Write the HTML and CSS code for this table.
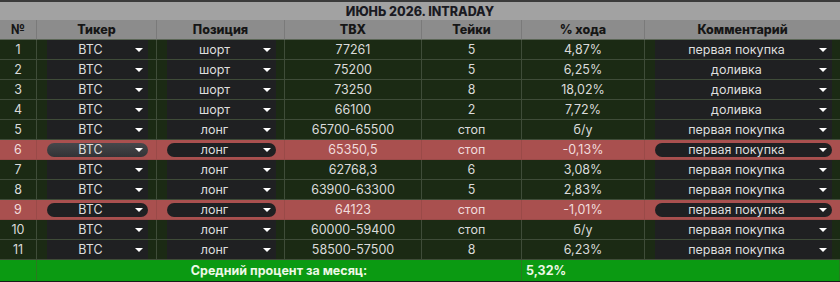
FILE: index.html
```html
<!DOCTYPE html>
<html lang="ru">
<head>
<meta charset="utf-8">
<link rel="stylesheet" href="styles.css">
</head>
<body>
<div class="sheet">
  <div class="topline"></div>
  <div class="title">ИЮНЬ 2026. INTRADAY</div>
  <div class="row head">
    <div class="c">№</div><div class="c">Тикер</div><div class="c">Позиция</div><div class="c">ТВХ</div><div class="c">Тейки</div><div class="c">% хода</div><div class="c">Комментарий</div>
  </div>

  <div class="row">
    <div class="c">1</div>
    <div class="c"><div class="dd"><span>BTC</span><i class="arr"></i></div></div>
    <div class="c"><div class="dd"><span>шорт</span><i class="arr"></i></div></div>
    <div class="c">77261</div><div class="c">5</div><div class="c">4,87%</div>
    <div class="c"><div class="dd"><span>первая покупка</span><i class="arr"></i></div></div>
  </div>
  <div class="row">
    <div class="c">2</div>
    <div class="c"><div class="dd"><span>BTC</span><i class="arr"></i></div></div>
    <div class="c"><div class="dd"><span>шорт</span><i class="arr"></i></div></div>
    <div class="c">75200</div><div class="c">5</div><div class="c">6,25%</div>
    <div class="c"><div class="dd"><span>доливка</span><i class="arr"></i></div></div>
  </div>
  <div class="row">
    <div class="c">3</div>
    <div class="c"><div class="dd"><span>BTC</span><i class="arr"></i></div></div>
    <div class="c"><div class="dd"><span>шорт</span><i class="arr"></i></div></div>
    <div class="c">73250</div><div class="c">8</div><div class="c">18,02%</div>
    <div class="c"><div class="dd"><span>доливка</span><i class="arr"></i></div></div>
  </div>
  <div class="row">
    <div class="c">4</div>
    <div class="c"><div class="dd"><span>BTC</span><i class="arr"></i></div></div>
    <div class="c"><div class="dd"><span>шорт</span><i class="arr"></i></div></div>
    <div class="c">66100</div><div class="c">2</div><div class="c">7,72%</div>
    <div class="c"><div class="dd"><span>доливка</span><i class="arr"></i></div></div>
  </div>
  <div class="row">
    <div class="c">5</div>
    <div class="c"><div class="dd"><span>BTC</span><i class="arr"></i></div></div>
    <div class="c"><div class="dd"><span>лонг</span><i class="arr"></i></div></div>
    <div class="c">65700-65500</div><div class="c">стоп</div><div class="c">б/у</div>
    <div class="c"><div class="dd"><span>первая покупка</span><i class="arr"></i></div></div>
  </div>
  <div class="row red">
    <div class="c">6</div>
    <div class="c"><div class="dd light"><span>BTC</span><i class="arr"></i></div></div>
    <div class="c"><div class="dd"><span>лонг</span><i class="arr"></i></div></div>
    <div class="c">65350,5</div><div class="c">стоп</div><div class="c">-0,13%</div>
    <div class="c"><div class="dd"><span>первая покупка</span><i class="arr"></i></div></div>
  </div>
  <div class="row">
    <div class="c">7</div>
    <div class="c"><div class="dd"><span>BTC</span><i class="arr"></i></div></div>
    <div class="c"><div class="dd"><span>лонг</span><i class="arr"></i></div></div>
    <div class="c">62768,3</div><div class="c">6</div><div class="c">3,08%</div>
    <div class="c"><div class="dd"><span>первая покупка</span><i class="arr"></i></div></div>
  </div>
  <div class="row">
    <div class="c">8</div>
    <div class="c"><div class="dd"><span>BTC</span><i class="arr"></i></div></div>
    <div class="c"><div class="dd"><span>лонг</span><i class="arr"></i></div></div>
    <div class="c">63900-63300</div><div class="c">5</div><div class="c">2,83%</div>
    <div class="c"><div class="dd"><span>первая покупка</span><i class="arr"></i></div></div>
  </div>
  <div class="row red">
    <div class="c">9</div>
    <div class="c"><div class="dd"><span>BTC</span><i class="arr"></i></div></div>
    <div class="c"><div class="dd"><span>лонг</span><i class="arr"></i></div></div>
    <div class="c">64123</div><div class="c">стоп</div><div class="c">-1,01%</div>
    <div class="c"><div class="dd"><span>первая покупка</span><i class="arr"></i></div></div>
  </div>
  <div class="row">
    <div class="c">10</div>
    <div class="c"><div class="dd"><span>BTC</span><i class="arr"></i></div></div>
    <div class="c"><div class="dd"><span>лонг</span><i class="arr"></i></div></div>
    <div class="c">60000-59400</div><div class="c">стоп</div><div class="c">б/у</div>
    <div class="c"><div class="dd"><span>первая покупка</span><i class="arr"></i></div></div>
  </div>
  <div class="row">
    <div class="c">11</div>
    <div class="c"><div class="dd"><span>BTC</span><i class="arr"></i></div></div>
    <div class="c"><div class="dd"><span>лонг</span><i class="arr"></i></div></div>
    <div class="c">58500-57500</div><div class="c">8</div><div class="c">6,23%</div>
    <div class="c"><div class="dd"><span>первая покупка</span><i class="arr"></i></div></div>
  </div>

  <div class="row foot">
    <div class="c"></div>
    <div class="c span">Средний процент за месяц:</div>
    <div class="c left">5,32%</div>
    <div class="c"></div>
  </div>
</div>
</body>
</html>
```
FILE: styles.css
```css
html, body {
  margin: 0;
  padding: 0;
  background: #1b2a14;
}
.sheet {
  width: 840px;
  font-family: "Inter", "Noto Sans", sans-serif;
  font-size: 12.5px;
  color: #dadada;
}
.topline {
  height: 2px;
  background: #3a3a3a;
}
.title {
  height: 18px;
  background: #a2a2a2;
  color: #1a1a22;
  font-weight: 800;
  font-size: 12.5px;
  display: flex;
  align-items: center;
  justify-content: center;
}
.row {
  display: grid;
  grid-template-columns: 37px 120px 128px 137px 100px 123px 195px;
  height: 20px;
  background: #1b2a14;
}
.c {
  box-sizing: border-box;
  border-right: 1px solid #3f4c39;
  border-bottom: 1px solid #3f4c39;
  display: flex;
  align-items: center;
  justify-content: center;
  min-width: 0;
  white-space: nowrap;
}
.c:last-child { border-right: none; }
.head {
  background: #8c8c8c;
  color: #161616;
  font-weight: 800;
}
.head .c {
  border-color: #7a7a7a;
  border-bottom-color: #5b6656;
}
.red {
  background: #a9504f;
  color: #f1dcdc;
}
.red .c {
  border-color: #9a4a48;
}
.dd {
  flex: 1;
  align-self: stretch;
  margin: 0 8px 0 10px;
  background: #1f2022;
  color: #dedede;
  display: flex;
  align-items: center;
}
.dd span {
  flex: 1;
  text-align: center;
}
.red .dd {
  align-self: center;
  height: 14px;
  border-radius: 7px;
}
.red .dd.light {
  background: linear-gradient(#46474b, #323336);
}
.arr {
  width: 0;
  height: 0;
  border-left: 4px solid transparent;
  border-right: 4px solid transparent;
  border-top: 4.5px solid #ffffff;
  margin: 1px 5px 0 1px;
}
.foot {
  height: 22px;
  grid-template-columns: 37px 485px 123px 195px;
  background: #0b9a12;
  color: #eef8e6;
  font-weight: 700;
  border-bottom: 1px solid #1a1a1a;
  box-sizing: border-box;
}
.foot .c {
  border: none;
  border-right: 1px solid #2a7a20;
}
.foot .c.left {
  justify-content: flex-start;
  padding-left: 4px;
  border-right: none;
}
```
